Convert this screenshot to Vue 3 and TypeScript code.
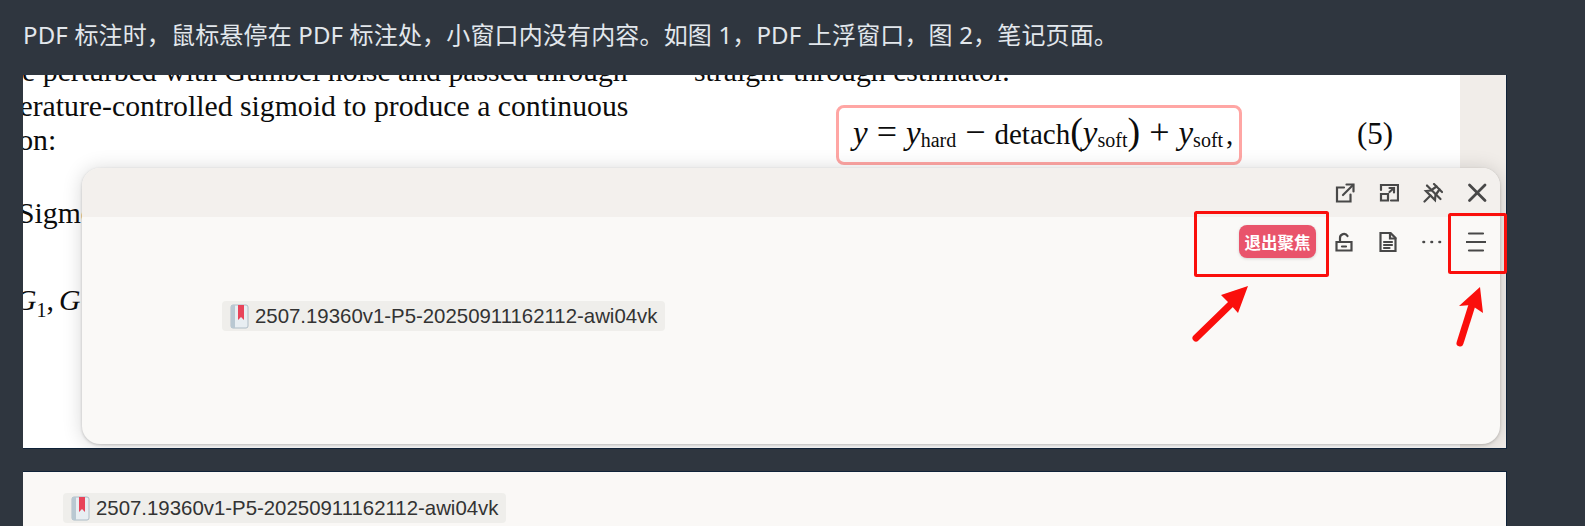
<template>
  <div class="page">
    <p class="caption">PDF 标注时，鼠标悬停在 PDF 标注处，小窗口内没有内容。如图 1，PDF 上浮窗口，图 2，笔记页面。</p>

    <div class="figure figure-pdf">
      <div class="pdf-page">
        <div class="pdf-left">
          <div class="line line-a">are perturbed with Gumbel noise and passed through</div>
          <div class="line line-b">temperature-controlled sigmoid to produce a continuous</div>
          <div class="line line-c">relaxation:</div>
          <div class="line line-d">Sigmoid</div>
          <div class="line line-e"><i>G</i><sub>1</sub><span class="comma">,</span><i>G</i></div>
        </div>
        <div class="pdf-right">
          <div class="line">straight-through estimator.</div>
          <div class="equation-row">
            <div class="equation">
              <i>y</i><span class="op">=</span><i>y</i><sub>hard</sub><span class="op">−</span>detach<span class="paren">(</span><i>y</i><sub>soft</sub><span class="paren">)</span><span class="op">+</span><i>y</i><sub>soft</sub><span class="comma">,</span>
            </div>
            <span class="equation-no">(5)</span>
          </div>
        </div>
      </div>
      <div class="pdf-side"></div>

      <!-- floating window over the pdf -->
      <div class="popup">
        <div class="popup-head">
          <svg v-for="icon in headIcons" :key="icon.name" class="icon" :class="icon.name" viewBox="0 0 20 20">
            <path v-for="d in icon.paths" :key="d" :d="d" />
          </svg>
        </div>
        <div class="popup-body">
          <div class="popup-tools">
            <button class="exit-focus">退出聚焦</button>
            <svg v-for="icon in bodyIcons" :key="icon.name" class="icon" :class="icon.name" viewBox="0 0 20 20">
              <path v-for="d in icon.paths" :key="d" :d="d" />
            </svg>
          </div>
          <div class="chip chip-popup">
            <svg class="book" viewBox="0 0 19 25">
              <rect x="1" y="1" width="17" height="23" rx="2" fill="#e8eef2" stroke="#aebcc6" />
              <rect x="1" y="1" width="4" height="23" fill="#b9c8d2" />
              <path d="M8 1h6v15l-3-3-3 3z" fill="#e8445a" />
            </svg>
            <span>{{ docName }}</span>
          </div>
        </div>
      </div>
    </div>

    <div class="figure figure-note">
      <div class="chip">
        <svg class="book" viewBox="0 0 19 25">
          <rect x="1" y="1" width="17" height="23" rx="2" fill="#e8eef2" stroke="#aebcc6" />
          <rect x="1" y="1" width="4" height="23" fill="#b9c8d2" />
          <path d="M8 1h6v15l-3-3-3 3z" fill="#e8445a" />
        </svg>
        <span>{{ docName }}</span>
      </div>
    </div>

    <!-- red markup drawn on top of the screenshot -->
    <svg class="markup" viewBox="0 0 1585 526">
      <rect x="1195.5" y="212.5" width="132" height="63" rx="1" />
      <rect x="1449.5" y="214.5" width="56" height="58" rx="1" />
      <path class="shaft" d="M1196 338 1231 304" />
      <path class="head" d="M1248 286 1221 295 1230 304 1238 313z" />
      <path class="shaft" d="M1460 343 1472 305" />
      <path class="head" d="M1480 287 1459 306 1471 305 1483 313z" />
    </svg>
  </div>
</template>

<script setup lang="ts">
interface ToolIcon {
  name: string
  paths: string[]
}

const docName = '2507.19360v1-P5-20250911162112-awi04vk'

const headIcons: ToolIcon[] = [
  { name: 'open', paths: ['M9 4.500H2V18.500h13.500v-7', 'M8 12 18 2', 'M11.500 1.500h7V8.500'] },
  { name: 'expand', paths: ['M2 7V2h17v15.500h-7', 'M2 11h7v6.500H2z', 'M10.500 9 15 5', 'M10.500 5h4.500v4.500'] },
  {
    name: 'pin',
    paths: ['M11 1 19 9', 'M13.500 3.500 8 7.500 3 8 12 17 12.500 12 16.500 6.500', 'M7.500 12.500 1.500 18.500', 'M4 2.500 17.500 16'],
  },
  { name: 'close', paths: ['M2.500 2 18 17.500', 'M18 2 2.500 17.500'] },
]

const bodyIcons: ToolIcon[] = [
  { name: 'lock', paths: ['M2.500 10h15v8.500h-15z', 'M6 10V6a4 4 0 0 1 7.500-2', 'M8 14.500h4'] },
  { name: 'doc', paths: ['M2.500 1h10l5 5V19h-15z', 'M12 1v5.500h5.500', 'M6 10h8', 'M6 13h8', 'M6 16h5.500'] },
  { name: 'more', paths: ['M1.500 10h.5', 'M9.500 10h.5', 'M17.500 10h.5'] },
  { name: 'menu', paths: ['M3 1.500h14', 'M0.500 10h19', 'M3 18.500h14'] },
]
</script>

<style>
html,
body {
  background: #2f363f;
}
</style>

<style scoped>
.page {
  position: relative;
  width: 1585px;
  height: 526px;
  overflow: hidden;
  box-sizing: border-box;
  padding-left: 23px;
  background: #2f363f;
}

.caption {
  margin: 0;
  height: 75px;
  display: flex;
  align-items: center;
  padding-bottom: 6px;
  box-sizing: border-box;
  color: #e2e7ec;
  font: 24px/1 "Noto Sans", "Noto Sans CJK SC", sans-serif;
  letter-spacing: 0.160px;
  white-space: pre;
}

.figure {
  position: relative;
  width: 1484px;
  box-sizing: border-box;
  overflow: hidden;
  border: 1px solid #0f2238;
  border-left: none;
}

.figure-pdf {
  height: 374px;
  display: flex;
  border-top: none;
  background: #fff;
}

.pdf-page {
  flex: 1;
  display: flex;
  margin-top: -21px;
  color: #0c0c0c;
  font: 29.750px/34.500px "Liberation Serif", serif;
  white-space: nowrap;
}

.pdf-left {
  width: 671px;
  flex-shrink: 0;
}

.line-a {
  margin-left: -24px;
}

.line-b {
  margin-left: -63px;
}

.line-c {
  margin-left: -94px;
}

.line-d {
  margin-top: 38px;
  margin-left: -5px;
}

.line-e {
  margin-top: 53px;
  margin-left: -8px;
}

.line sub {
  font-size: 20px;
  line-height: 0;
}

.line-e .comma {
  margin-right: 5px;
}

.equation-row {
  display: flex;
  align-items: center;
  margin-top: 16px;
  margin-left: 142px;
}

.equation {
  width: 406px;
  height: 60px;
  box-sizing: border-box;
  border: 3px solid #ffa6a4;
  border-radius: 8px;
  padding-left: 14px;
  font-size: 29px;
  line-height: 52px;
}

.equation i {
  font-size: 33px;
  line-height: 0;
}

.equation sub {
  font-size: 20px;
  line-height: 0;
  vertical-align: -3px;
}

.equation .op {
  margin: 0 9px;
  font-size: 36px;
  line-height: 0;
}

.equation .paren {
  font-size: 38px;
  line-height: 0;
}

.equation .comma {
  margin-left: 3px;
}

.equation-no {
  margin-left: 115px;
  font-size: 31px;
}

.pdf-side {
  width: 46px;
  flex-shrink: 0;
  background: #f1ede9;
}

.popup {
  position: absolute;
  left: 59px;
  top: 93px;
  width: 1418px;
  height: 276px;
  display: flex;
  flex-direction: column;
  border-radius: 18px;
  overflow: hidden;
  background: #faf9f7;
  box-shadow: 0 1px 20px rgba(0, 0, 0, 0.16), 0 1px 3px rgba(0, 0, 0, 0.2);
}

.popup-head {
  height: 49px;
  flex-shrink: 0;
  display: flex;
  align-items: center;
  justify-content: flex-end;
  gap: 24px;
  padding-right: 13px;
  background: #f3f0ed;
}

.popup-body {
  flex: 1;
}

.popup-tools {
  display: flex;
  align-items: center;
  justify-content: flex-end;
  gap: 24px;
  padding: 8px 14px 0 0;
}

.icon {
  width: 20px;
  height: 20px;
  fill: none;
  stroke: #484848;
  stroke-width: 2.200;
  stroke-linecap: round;
}

.icon.close {
  stroke-width: 2.800;
}

.icon.more {
  stroke-width: 2.600;
}

.exit-focus {
  width: 77px;
  height: 33px;
  margin-right: -6px;
  padding: 0;
  border: none;
  border-radius: 8px;
  background: #e9546b;
  color: #fff;
  font: 700 16.500px "Noto Sans CJK SC", sans-serif;
  box-shadow: 0 1px 3px rgba(0, 0, 0, 0.15);
}

.chip {
  display: inline-flex;
  align-items: center;
  gap: 6px;
  height: 30px;
  padding: 0 8px;
  border-radius: 4px;
  background: #efeeeb;
  color: #333;
  font: 20.400px "Liberation Sans", sans-serif;
  white-space: nowrap;
}

.chip-popup {
  margin: 43px 0 0 140px;
}

.book {
  width: 19px;
  height: 25px;
  flex-shrink: 0;
}

.figure-note {
  height: 60px;
  margin-top: 22px;
  padding: 21px 0 0 40px;
  border-bottom: none;
  background: #faf8f6;
}

.markup {
  position: absolute;
  left: 0;
  top: 0;
  width: 1585px;
  height: 526px;
  pointer-events: none;
}

.markup rect {
  fill: none;
  stroke: #fa0f0c;
  stroke-width: 3;
}

.markup .shaft {
  fill: none;
  stroke: #fa0f0c;
  stroke-width: 7;
  stroke-linecap: round;
}

.markup .head {
  fill: #fa0f0c;
}
</style>
